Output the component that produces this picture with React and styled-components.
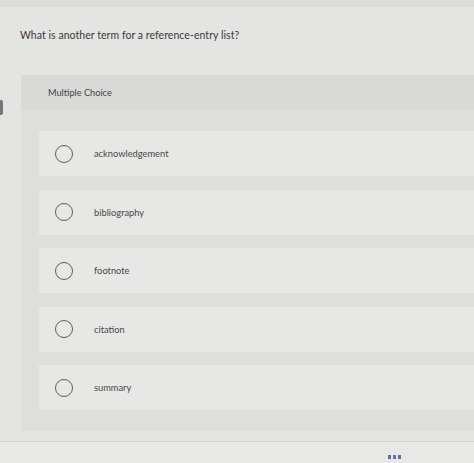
import React from 'react'
import styled, {createGlobalStyle} from 'styled-components'

const GlobalStyle = createGlobalStyle`
  html, body {
    margin: 0;
    padding: 0;
    background: #e3e3e1;
  }
  body {
    font-family: Lato, 'Open Sans', 'Liberation Sans', sans-serif;
    color: #3b3b3b;
  }
`

const Page = styled.div`
  position: relative;
  width: 474px;
  height: 463px;
  overflow: hidden;
  display: flex;
  flex-direction: column;
  background: linear-gradient(180deg, #dcdcda 0, #dcdcda 7px, #e4e4e2 7px);
`

const EdgeTab = styled.div`
  position: absolute;
  left: -2px;
  top: 100px;
  width: 5px;
  height: 15px;
  border-radius: 2px;
  background: #767676;
`

const Question = styled.h1`
  margin: 26px 0 0 20px;
  font-size: 10.5px;
  font-weight: 400;
  line-height: 18px;
  color: #3a3a3a;
  letter-spacing: 0.05px;
`

const Panel = styled.section`
  margin: 31px 0 0 21px;
  background: #dededc;
  display: flex;
  flex-direction: column;
  padding-bottom: 21px;
`

const PanelHeader = styled.div`
  height: 35px;
  padding-left: 27px;
  display: flex;
  align-items: center;
  background: #d9d9d7;
  font-size: 9.2px;
  color: #444;
`

const Options = styled.div`
  display: flex;
  flex-direction: column;
  gap: 13.5px;
  padding: 21px 0 0 18px;
`

const Option = styled.label`
  height: 45px;
  display: flex;
  align-items: center;
  background: #e7e7e5;
  font-size: 9.3px;
  color: #474747;
  cursor: pointer;
`

const Radio = styled.span`
  width: 18px;
  height: 18px;
  margin: 0 21px 0 16px;
  border-radius: 50%;
  border: 1px solid #5e5e5e;
  box-sizing: border-box;
  flex: none;
`

const Footer = styled.div`
  margin-top: 10px;
  flex: 1;
  border-top: 1px solid #d4d4d2;
  background: #e8e8e6;
  position: relative;
`

const Dots = styled.span`
  position: absolute;
  left: 388px;
  top: 13px;
  width: 14px;
  height: 4px;
  background: repeating-linear-gradient(90deg, #5b6fb8 0 3px, transparent 3px 5px);
`

const choices = ['acknowledgement', 'bibliography', 'footnote', 'citation', 'summary']

export default function App() {
  return (
    <Page>
      <GlobalStyle />
      <EdgeTab />
      <Question>What is another term for a reference-entry list?</Question>
      <Panel>
        <PanelHeader>Multiple Choice</PanelHeader>
        <Options>
          {choices.map(c => (
            <Option key={c}>
              <Radio />
              {c}
            </Option>
          ))}
        </Options>
      </Panel>
      <Footer>
        <Dots />
      </Footer>
    </Page>
  )
}
